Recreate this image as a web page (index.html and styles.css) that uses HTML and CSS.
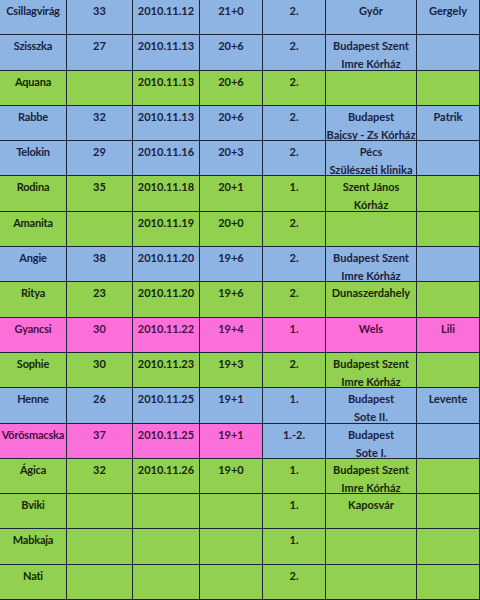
FILE: index.html
```html
<!DOCTYPE html>
<html lang="hu">
<head>
<meta charset="utf-8">
<title>Lista</title>
<link rel="stylesheet" href="styles.css">
</head>
<body>
<div class="list">
  <div class="row blue"><div class="cell">Csillagvirág</div><div class="cell">33</div><div class="cell">2010.11.12</div><div class="cell">21+0</div><div class="cell">2.</div><div class="cell">Győr</div><div class="cell">Gergely</div></div>
  <div class="row blue"><div class="cell">Szisszka</div><div class="cell">27</div><div class="cell">2010.11.13</div><div class="cell">20+6</div><div class="cell">2.</div><div class="cell">Budapest Szent<br>Imre Kórház</div><div class="cell"></div></div>
  <div class="row green"><div class="cell">Aquana</div><div class="cell"></div><div class="cell">2010.11.13</div><div class="cell">20+6</div><div class="cell">2.</div><div class="cell"></div><div class="cell"></div></div>
  <div class="row blue"><div class="cell">Rabbe</div><div class="cell">32</div><div class="cell">2010.11.13</div><div class="cell">20+6</div><div class="cell">2.</div><div class="cell">Budapest<br>Bajcsy - Zs Kórház</div><div class="cell">Patrik</div></div>
  <div class="row blue"><div class="cell">Telokin</div><div class="cell">29</div><div class="cell">2010.11.16</div><div class="cell">20+3</div><div class="cell">2.</div><div class="cell">Pécs<br>Szülészeti klinika</div><div class="cell"></div></div>
  <div class="row green"><div class="cell">Rodina</div><div class="cell">35</div><div class="cell">2010.11.18</div><div class="cell">20+1</div><div class="cell">1.</div><div class="cell">Szent János<br>Kórház</div><div class="cell"></div></div>
  <div class="row green"><div class="cell">Amanita</div><div class="cell"></div><div class="cell">2010.11.19</div><div class="cell">20+0</div><div class="cell">2.</div><div class="cell"></div><div class="cell"></div></div>
  <div class="row blue"><div class="cell">Angie</div><div class="cell">38</div><div class="cell">2010.11.20</div><div class="cell">19+6</div><div class="cell">2.</div><div class="cell">Budapest Szent<br>Imre Kórház</div><div class="cell"></div></div>
  <div class="row green"><div class="cell">Ritya</div><div class="cell">23</div><div class="cell">2010.11.20</div><div class="cell">19+6</div><div class="cell">2.</div><div class="cell">Dunaszerdahely</div><div class="cell"></div></div>
  <div class="row pink"><div class="cell">Gyancsi</div><div class="cell">30</div><div class="cell">2010.11.22</div><div class="cell">19+4</div><div class="cell">1.</div><div class="cell">Wels</div><div class="cell">Lili</div></div>
  <div class="row green"><div class="cell">Sophie</div><div class="cell">30</div><div class="cell">2010.11.23</div><div class="cell">19+3</div><div class="cell">2.</div><div class="cell">Budapest Szent<br>Imre Kórház</div><div class="cell"></div></div>
  <div class="row blue"><div class="cell">Henne</div><div class="cell">26</div><div class="cell">2010.11.25</div><div class="cell">19+1</div><div class="cell">1.</div><div class="cell">Budapest<br>Sote II.</div><div class="cell">Levente</div></div>
  <div class="row pink"><div class="cell">Vörösmacska</div><div class="cell">37</div><div class="cell">2010.11.25</div><div class="cell">19+1</div><div class="cell alt">1.-2.</div><div class="cell alt">Budapest<br>Sote I.</div><div class="cell alt"></div></div>
  <div class="row green"><div class="cell">Ágica</div><div class="cell">32</div><div class="cell">2010.11.26</div><div class="cell">19+0</div><div class="cell">1.</div><div class="cell">Budapest Szent<br>Imre Kórház</div><div class="cell"></div></div>
  <div class="row green"><div class="cell">Bviki</div><div class="cell"></div><div class="cell"></div><div class="cell"></div><div class="cell">1.</div><div class="cell">Kaposvár</div><div class="cell"></div></div>
  <div class="row green"><div class="cell">Mabkaja</div><div class="cell"></div><div class="cell"></div><div class="cell"></div><div class="cell">1.</div><div class="cell"></div><div class="cell"></div></div>
  <div class="row green"><div class="cell">Nati</div><div class="cell"></div><div class="cell"></div><div class="cell"></div><div class="cell">2.</div><div class="cell"></div><div class="cell"></div></div>
</div>
</body>
</html>
```

FILE: styles.css
```css
html, body {
  margin: 0;
  padding: 0;
  width: 480px;
  height: 600px;
  overflow: hidden;
  background: #92d050;
}

.list {
  width: 480px;
  height: 600px;
  display: grid;
  grid-template-rows: repeat(17, 1fr);
  font-family: Lato, "Liberation Sans", sans-serif;
  font-weight: 700;
  font-size: 11px;
  line-height: 18px;
}

.row {
  display: grid;
  grid-template-columns: 67px 66px 67px 63px 63px 91px 63px;
  min-height: 0;
}

.cell {
  box-sizing: border-box;
  padding-top: 2px;
  text-align: center;
  white-space: nowrap;
  overflow: visible;
  border-right: 1px solid #1b2638;
  border-bottom: 1px solid #1b2638;
  min-height: 0;
}

.cell:first-child {
  letter-spacing: -0.2px;
}

.blue .cell,
.cell.alt {
  background: #8db4e2;
  color: #1a2240;
}

.green .cell {
  background: #92d050;
  color: #15260c;
}

.pink .cell {
  background: #fb70d8;
  color: #4a0e3e;
}

.pink .cell.alt {
  background: #8db4e2;
  color: #1a2240;
}
```
